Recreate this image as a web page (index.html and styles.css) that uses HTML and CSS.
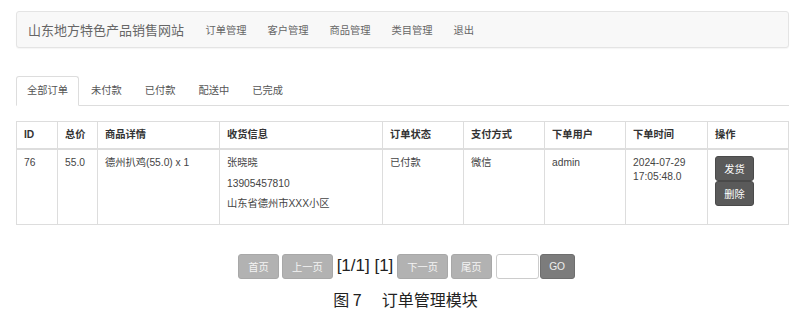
FILE: index.html
```html
<!DOCTYPE html>
<html lang="zh-CN">
<head>
  <meta charset="UTF-8" />
  <title>订单管理</title>
  <link rel="stylesheet" href="styles.css">
</head>
<body>
  <nav class="navbar">
    <span class="brand">山东地方特色产品销售网站</span>
    <a class="nav-link" href="#">订单管理</a>
    <a class="nav-link" href="#">客户管理</a>
    <a class="nav-link" href="#">商品管理</a>
    <a class="nav-link" href="#">类目管理</a>
    <a class="nav-link" href="#">退出</a>
  </nav>

  <ul class="tabs">
    <li class="tab active">全部订单</li>
    <li class="tab">未付款</li>
    <li class="tab">已付款</li>
    <li class="tab">配送中</li>
    <li class="tab">已完成</li>
  </ul>

  <table class="orders">
    <thead>
      <tr>
        <th class="c-id">ID</th>
        <th class="c-price">总价</th>
        <th class="c-goods">商品详情</th>
        <th class="c-addr">收货信息</th>
        <th class="c-status">订单状态</th>
        <th class="c-pay">支付方式</th>
        <th class="c-user">下单用户</th>
        <th class="c-time">下单时间</th>
        <th class="c-op">操作</th>
      </tr>
    </thead>
    <tbody>
      <tr>
        <td>76</td>
        <td>55.0</td>
        <td>德州扒鸡(55.0) x 1</td>
        <td>
          <p>张晓晓</p>
          <p>13905457810</p>
          <p>山东省德州市XXX小区</p>
        </td>
        <td>已付款</td>
        <td>微信</td>
        <td>admin</td>
        <td>2024-07-29<br>17:05:48.0</td>
        <td>
          <button class="btn-op">发货</button>
          <button class="btn-op">删除</button>
        </td>
      </tr>
    </tbody>
  </table>

  <div class="pager">
    <button class="btn-page">首页</button>
    <button class="btn-page">上一页</button>
    <span class="page-info">[1/1] [1]</span>
    <button class="btn-page">下一页</button>
    <button class="btn-page">尾页</button>
    <input class="page-input" type="text">
    <button class="btn-go">GO</button>
  </div>

  <div class="caption">图 7<span class="caption-gap"></span>订单管理模块</div>
</body>
</html>
```

FILE: styles.css
```css
body {
  margin: 0;
  padding: 11px 11px 0 16px;
  font-family: "Liberation Sans", "Noto Sans CJK SC", sans-serif;
  font-size: 10.25px;
  color: #333;
  background: #fff;
}

.navbar {
  display: flex;
  align-items: center;
  height: 35px;
  background: #f8f8f8;
  border: 1px solid #e4e4e4;
  border-radius: 3px;
  box-shadow: 0 1px 1px rgba(0, 0, 0, 0.04);
}
.brand {
  padding: 0 11px 0 11px;
  font-size: 13px;
  color: #666;
}
.nav-link {
  padding: 0 10.5px;
  color: #666;
  text-decoration: none;
}

.tabs {
  display: flex;
  list-style: none;
  margin: 28px 0 0 0;
  padding: 0;
  border-bottom: 1px solid #ddd;
}
.tab {
  padding: 0 10px;
  height: 28px;
  line-height: 28px;
  margin-right: 1px;
  margin-bottom: -1px;
  color: #555;
  border: 1px solid transparent;
  border-radius: 3px 3px 0 0;
}
.tab.active {
  border-color: #ddd;
  border-bottom-color: #fff;
  background: #fff;
}

.orders {
  width: 100%;
  margin-top: 15px;
  border-collapse: collapse;
  table-layout: fixed;
  border: 1px solid #ddd;
}
.orders th,
.orders td {
  box-sizing: border-box;
  border: 1px solid #ddd;
  padding: 6px 7px;
  line-height: 14px;
  text-align: left;
  vertical-align: top;
}
.orders th {
  font-weight: bold;
  color: #333;
  border-bottom-width: 2px;
}
.orders td {
  color: #444;
}
.orders p {
  margin: 0 0 6.5px 0;
}
.c-id { width: 41px; }
.c-price { width: 40px; }
.c-goods { width: 122px; }
.c-addr { width: 163px; }
.c-status { width: 81px; }
.c-pay { width: 81px; }
.c-user { width: 81px; }
.c-time { width: 82px; }

.btn-op {
  display: block;
  width: 39px;
  height: 25px;
  padding: 0;
  border: 1px solid #4a4a4a;
  border-radius: 3px;
  background: #5a5a5a;
  color: #fff;
  font-family: inherit;
  font-size: 10.25px;
}

.pager {
  display: flex;
  justify-content: center;
  align-items: center;
  gap: 3px;
  margin-top: 29px;
  padding-left: 8px;
}
.btn-page {
  height: 25px;
  padding: 0 9px;
  border: 1px solid #a8a8a8;
  border-radius: 3px;
  background: #b2b2b2;
  color: #f4f4f4;
  font-family: inherit;
  font-size: 10.25px;
}
.page-info {
  font-size: 17px;
  color: #222;
  margin: 0 1px;
}
.page-input {
  width: 43px;
  height: 25px;
  box-sizing: border-box;
  border: 1px solid #ccc;
  border-radius: 3px;
  margin-left: 1px;
}
.btn-go {
  width: 35px;
  height: 25px;
  margin-left: -2px;
  border: 1px solid #6e6e6e;
  border-radius: 3px;
  background: #7c7c7c;
  color: #eee;
  font-family: inherit;
  font-size: 10.25px;
}

.caption {
  margin-top: 10px;
  padding-left: 6px;
  text-align: center;
  font-family: "Noto Sans CJK SC", sans-serif;
  font-size: 16px;
  line-height: 20px;
  color: #222;
}
.caption-gap {
  display: inline-block;
  width: 20px;
}
```
